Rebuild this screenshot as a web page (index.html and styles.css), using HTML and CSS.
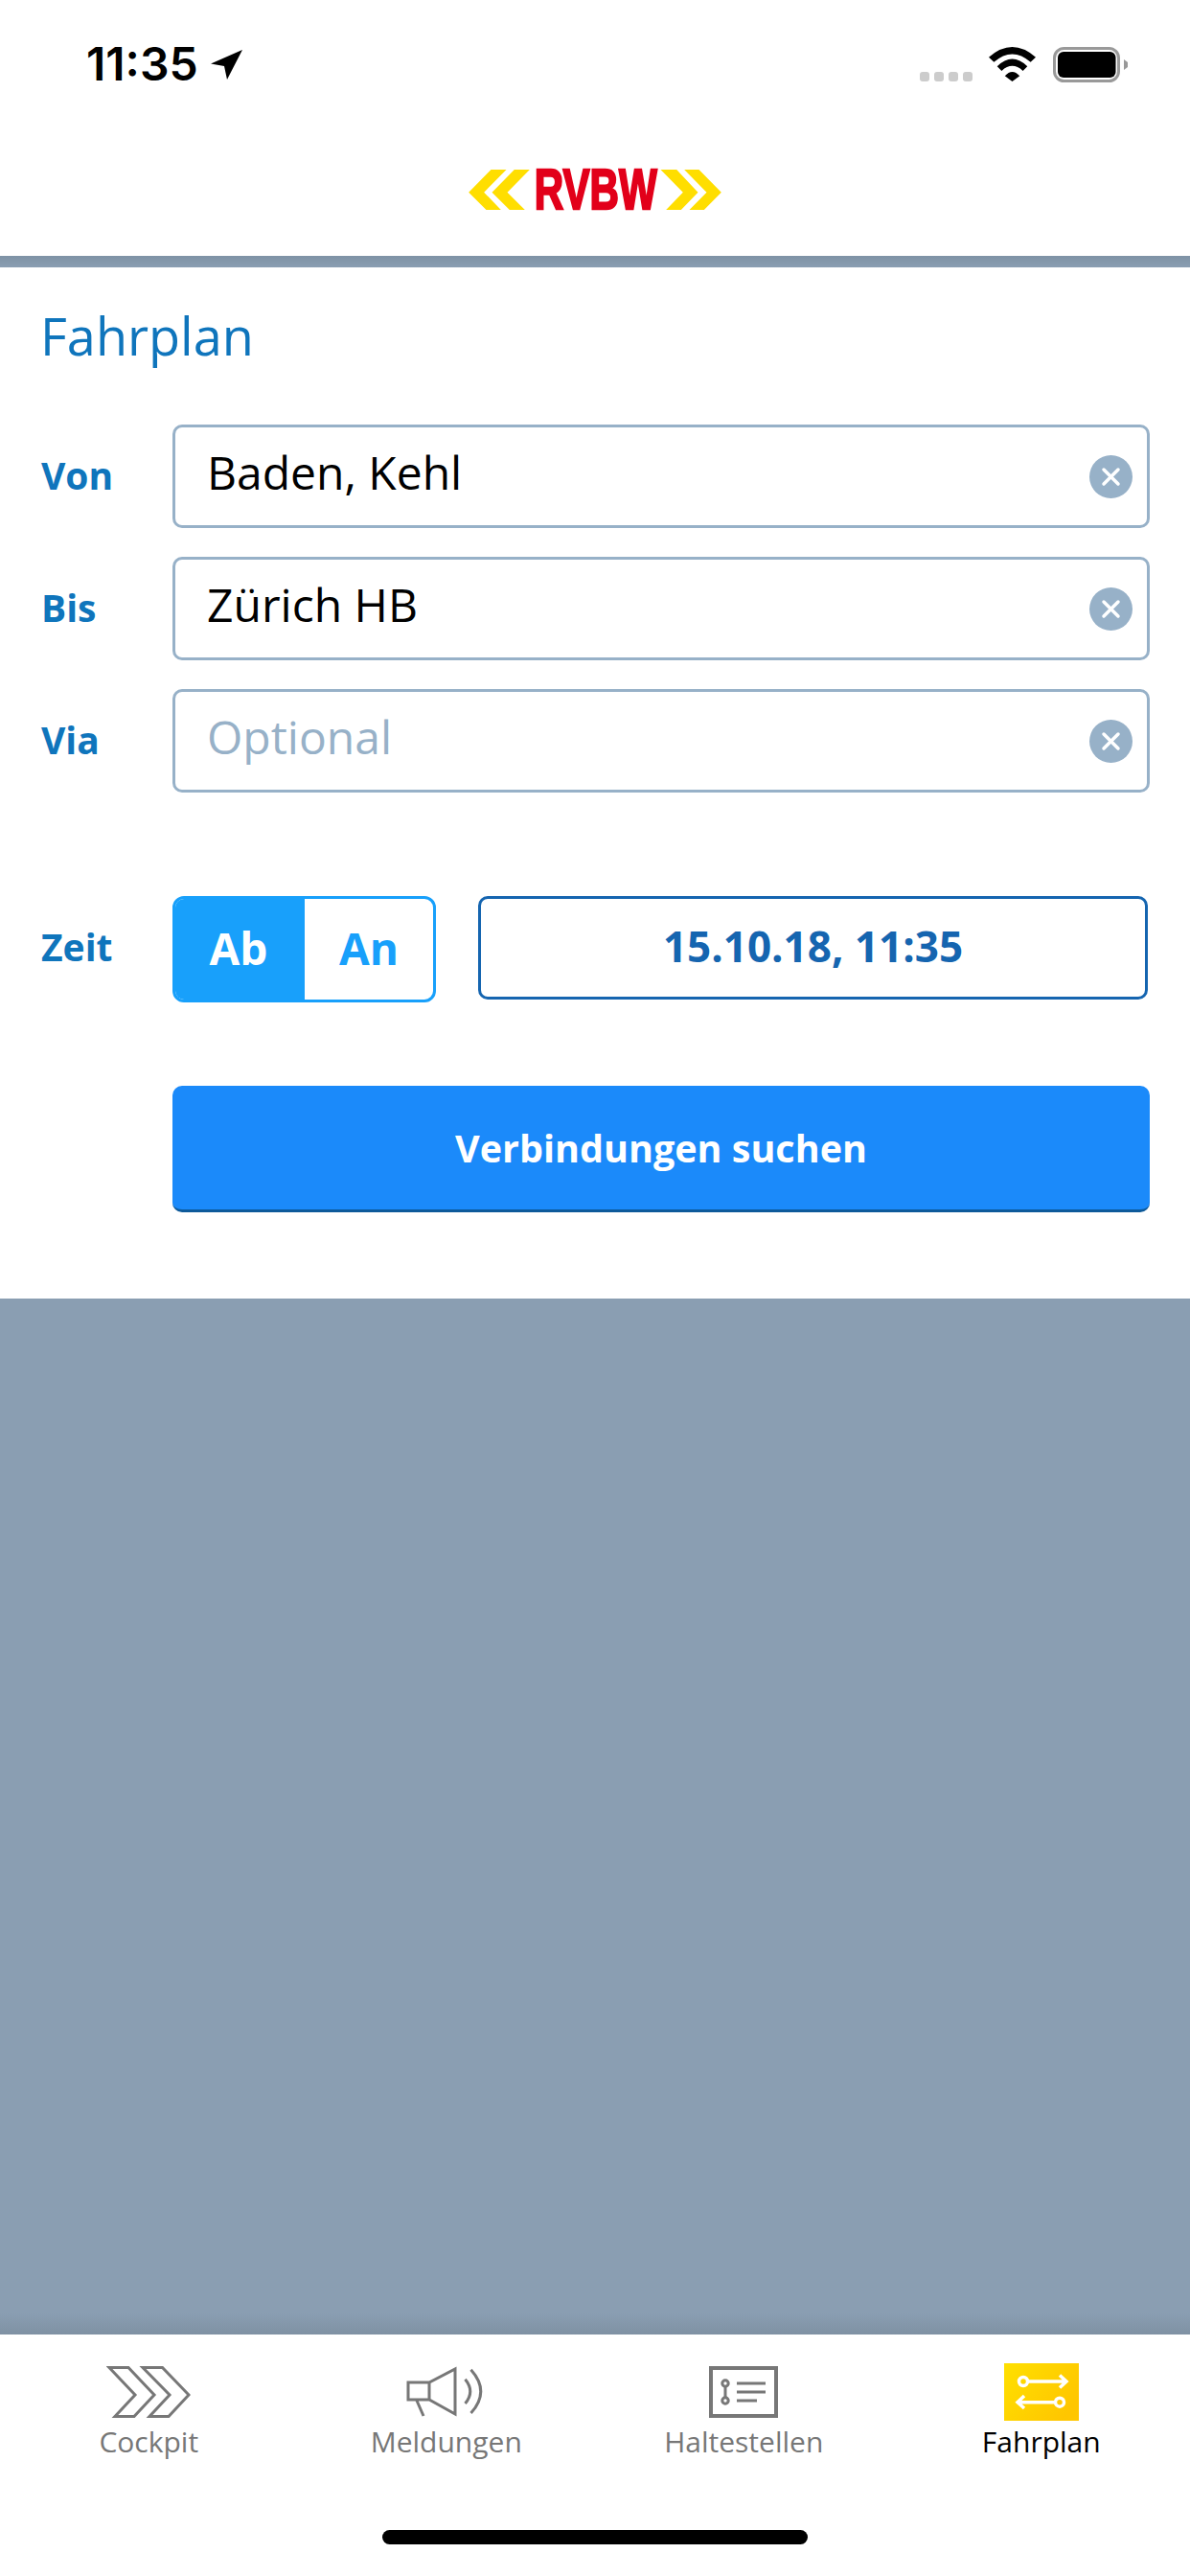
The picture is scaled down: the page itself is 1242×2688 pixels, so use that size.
FILE: index.html
```html
<!DOCTYPE html>
<html lang="de">
<head>
  <meta charset="UTF-8" />
  <meta name="viewport" content="width=device-width, initial-scale=1.0" />
  <title>RVBW – Fahrplan</title>
  <link rel="stylesheet" href="styles.css">
</head>
<body>
  <header class="top">
    <div class="status">
      <div class="status-left">
        <span class="clock">11:35</span>
        <svg class="loc" viewBox="0 0 33 31"><path d="M33 0 L0 14.500 L14 17 L17 31 Z"/></svg>
      </div>
      <div class="status-right">
        <svg class="dots" viewBox="0 0 55 36">
          <rect x="0" y="26" width="10" height="10" rx="3"/>
          <rect x="15" y="26" width="10" height="10" rx="3"/>
          <rect x="30" y="26" width="10" height="10" rx="3"/>
          <rect x="45" y="26" width="10" height="10" rx="3"/>
        </svg>
        <svg class="wifi" viewBox="397 58 146 107">
          <path d="M397 90 Q470 26 543 90 L527 105 Q470 55 413 105 Z"/>
          <path d="M423 118 Q470 72 517 118 L503 132 Q470 102 437 132 Z"/>
          <path d="M447 148 Q470 122 493 148 L470 165 Z"/>
        </svg>
        <svg class="battery" viewBox="0 0 78 37">
          <rect x="1.5" y="1.5" width="67" height="34" rx="10" fill="none" stroke="#999" stroke-width="3"/>
          <rect x="5" y="5" width="60.500" height="27" rx="6"/>
          <path d="M74 13 L78 16 V21 L74 24 Z" fill="#999"/>
        </svg>
      </div>
    </div>
    <div class="logo">
      <svg viewBox="147 39 791 207" width="264" height="69">
        <g fill="#ffde00">
          <polygon points="217,81 265,81 195,152 248,207 202,207 147,152"/>
          <polygon points="290,81 338,81 268,152 323,207 275,207 220,152"/>
          <polygon points="748,81 798,81 865,152 812,207 765,207 818,152"/>
          <polygon points="822,81 868,81 938,152 884,207 838,207 892,152"/>
        </g>
        <text class="logo-text" x="353" y="204" textLength="384" lengthAdjust="spacingAndGlyphs">RVBW</text>
      </svg>
    </div>
  </header>
  <div class="rule"></div>

  <main class="form">
    <h1 class="title">Fahrplan</h1>

    <div class="fields">
      <div class="row">
        <label class="lbl">Von</label>
        <div class="field">
          <span class="val">Baden, Kehl</span>
          <svg class="clear" viewBox="0 0 45 45"><circle cx="22.500" cy="22.500" r="22.500"/><path d="M15 15 L30 30 M30 15 L15 30"/></svg>
        </div>
      </div>
      <div class="row">
        <label class="lbl">Bis</label>
        <div class="field">
          <span class="val">Zürich HB</span>
          <svg class="clear" viewBox="0 0 45 45"><circle cx="22.500" cy="22.500" r="22.500"/><path d="M15 15 L30 30 M30 15 L15 30"/></svg>
        </div>
      </div>
      <div class="row">
        <label class="lbl">Via</label>
        <div class="field">
          <span class="val placeholder">Optional</span>
          <svg class="clear" viewBox="0 0 45 45"><circle cx="22.500" cy="22.500" r="22.500"/><path d="M15 15 L30 30 M30 15 L15 30"/></svg>
        </div>
      </div>
    </div>

    <div class="row time-row">
      <label class="lbl">Zeit</label>
      <div class="seg">
        <span class="seg-item active">Ab</span>
        <span class="seg-item">An</span>
      </div>
      <div class="date">15.10.18, 11:35</div>
    </div>

    <div class="row submit-row">
      <button class="search">Verbindungen suchen</button>
    </div>
  </main>

  <div class="backdrop"></div>

  <nav class="tabs">
    <div class="tab">
      <svg class="tab-icon" width="88" height="54" viewBox="0 0 88 54">
        <path class="ln" d="M3 1.500 H23 L50 30 L29 52.500 H9 L30 30 Z"/>
        <path class="ln" d="M38 1.500 H58.500 L86 30 L65 52.500 H45 L66 30 Z"/>
      </svg>
      <span>Cockpit</span>
    </div>
    <div class="tab">
      <svg class="tab-icon" width="84" height="54" viewBox="0 0 84 54">
        <path class="ln" d="M2 17 H24 L51 3 V50 L24 35 H2 Z M24 17 V35 M11 36 L18 52"/>
        <path class="ln" d="M61.500 13.700 Q72 26.500 61.500 39 M67.500 3.700 Q88 26.500 67.500 49"/>
      </svg>
      <span>Meldungen</span>
    </div>
    <div class="tab">
      <svg class="tab-icon" width="72" height="54" viewBox="0 0 72 54">
        <rect class="ln box" x="2" y="2" width="68" height="50"/>
        <path class="ln" d="M17 21 V33"/>
        <circle class="ln" cx="17" cy="18" r="3.200"/>
        <circle class="ln" cx="17" cy="36" r="3.200"/>
        <path class="ln" d="M29 18 H59 M29 27 H59 M29 36 H50"/>
      </svg>
      <span>Haltestellen</span>
    </div>
    <div class="tab current">
      <svg class="tab-icon" width="78" height="60" viewBox="0 0 78 60">
        <defs>
          <linearGradient id="gold" x1="0" y1="0" x2="1" y2="0.600">
            <stop offset="0" stop-color="#ffe000"/>
            <stop offset="1" stop-color="#ffc600"/>
          </linearGradient>
        </defs>
        <rect width="78" height="60" fill="url(#gold)"/>
        <circle class="wh" cx="20" cy="19" r="4.500"/>
        <path class="wh" d="M25 19 H65 M58 12.500 L65 19 L58 25.500"/>
        <circle class="wh" cx="58" cy="40.700" r="4.500"/>
        <path class="wh" d="M53 40.700 H14 M21 34 L14 40.700 L21 47"/>
      </svg>
      <span>Fahrplan</span>
    </div>
  </nav>
  <div class="home-wrap"><div class="home-bar"></div></div>
</body>
</html>
```

FILE: styles.css
```css
* { box-sizing: border-box; }
body { margin: 0; width: 1242px; height: 2688px; display: flex; flex-direction: column; background: #fff; font-family: "Open Sans", "Noto Sans", sans-serif; overflow: hidden; }

/* header */
.top { height: 267px; background: #fff; flex: none; }
.status { height: 134px; display: flex; justify-content: space-between; align-items: center; padding: 0 65px 0 90px; }
.status-left, .status-right { display: flex; align-items: center; }
.clock { font-family: Inter, sans-serif; font-weight: 600; font-size: 48px; line-height: 48px; color: #000; letter-spacing: 0; }
.loc { width: 33px; height: 31px; margin-left: 13px; }
.dots { width: 55px; height: 36px; fill: #ccc; }
.wifi { width: 49px; height: 36px; margin-left: 17px; }
.battery { width: 78px; height: 37px; margin-left: 18px; }
.logo { margin-top: 29px; height: 69px; display: flex; justify-content: center; }
.logo-text { font-family: "Liberation Sans", sans-serif; font-weight: bold; font-size: 178px; fill: #e2001a; stroke: #e2001a; stroke-width: 7px; }
.rule { height: 12px; flex: none; background: linear-gradient(#7e92a5, #8a9eb2); }

/* form */
.form { flex: none; height: 1076px; background: #fff; padding: 36px 42px 0 42px; }
.title { margin: 0 0 58px; font-size: 54px; line-height: 70px; font-weight: 400; color: #0f75bc; }
.fields { display: flex; flex-direction: column; gap: 30px; }
.row { display: flex; align-items: center; }
.lbl { width: 138px; flex: none; font-size: 39px; line-height: 50px; margin-top: -2px; font-weight: 700; color: #0f75bc; padding-left: 1px; }
.field { flex: 1; height: 108px; display: flex; align-items: center; justify-content: space-between; padding: 0 15px 0 33px; border: 3px solid #97b1c8; border-radius: 10px; }
.val { font-size: 48px; line-height: 60px; margin-top: -8px; color: #000; }
.placeholder { color: #97b1c8; }
.clear { width: 45px; height: 45px; flex: none; fill: #97b1c8; }
.clear path { stroke: #fff; stroke-width: 3.500; stroke-linecap: round; fill: none; }

.time-row { margin-top: 108px; align-items: flex-start; }
.time-row .lbl { line-height: 106px; margin-top: 0; }
.seg { width: 275px; height: 111px; display: flex; border: 3px solid #18a0fb; border-radius: 12px; overflow: hidden; flex: none; }
.seg-item { flex: 1; display: flex; align-items: center; justify-content: center; font-size: 46px; padding: 0 0 4px; font-weight: 700; color: #18a0fb; }
.seg-item.active { background: #18a0fb; color: #fff; flex: none; width: 135px; padding-right: 3px; }
.date { margin: 0 2px 0 44px; flex: 1; height: 108px; padding-bottom: 4px; border: 3px solid #1565b0; border-radius: 10px; display: flex; align-items: center; justify-content: center; font-size: 44px; font-weight: 700; color: #1565b0; }

.submit-row { margin-top: 87px; padding-left: 138px; }
.search { width: 100%; height: 132px; background: #1b8afa; border: none; border-bottom: 3px solid #0d5a9a; border-radius: 10px; color: #fff; font-family: inherit; font-size: 39.500px; font-weight: 700; padding: 0; }

.backdrop { flex: 1; background: linear-gradient(#8a9eb2 calc(100% - 22px), #7f91a3); }

/* tab bar */
.tabs { height: 204px; flex: none; background: #fff; display: grid; grid-template-columns: repeat(4, 1fr); }
.tab { height: 132px; padding-top: 30px; display: flex; flex-direction: column; align-items: center; font-size: 30px; line-height: 40px; color: #777; }
.tab-icon { height: 60px; margin-bottom: 2px; flex: none; }
.tab.current { color: #000; }
.ln { fill: none; stroke: #777; stroke-width: 3; }
.ln.box { stroke-width: 4; }
.wh { fill: none; stroke: #fff; stroke-width: 3.500; }
.home-wrap { height: 48px; flex: none; background: #fff; display: flex; justify-content: center; }
.home-bar { width: 444px; height: 15px; background: #000; border-radius: 8px; }
```
